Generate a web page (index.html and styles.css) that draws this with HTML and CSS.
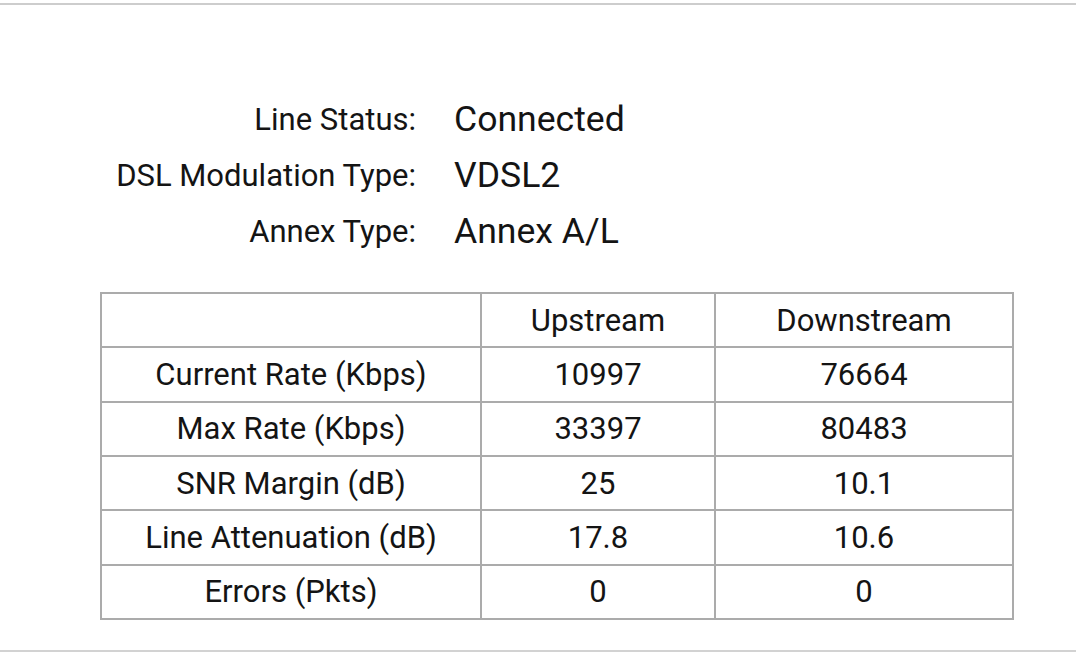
FILE: index.html
```html
<!DOCTYPE html>
<html lang="en">
<head>
<meta charset="utf-8">
<title>DSL Status</title>
<link rel="stylesheet" href="styles.css">
</head>
<body>
<div class="panel">
  <div class="info">
    <div class="label">Line Status:</div>
    <div class="value">Connected</div>
    <div class="label">DSL Modulation Type:</div>
    <div class="value">VDSL2</div>
    <div class="label">Annex Type:</div>
    <div class="value">Annex A/L</div>
  </div>
  <table class="stats">
    <colgroup>
      <col class="c1"><col class="c2"><col class="c3">
    </colgroup>
    <tr><td></td><td>Upstream</td><td>Downstream</td></tr>
    <tr><td>Current Rate (Kbps)</td><td>10997</td><td>76664</td></tr>
    <tr><td>Max Rate (Kbps)</td><td>33397</td><td>80483</td></tr>
    <tr><td>SNR Margin (dB)</td><td>25</td><td>10.1</td></tr>
    <tr><td>Line Attenuation (dB)</td><td>17.8</td><td>10.6</td></tr>
    <tr><td>Errors (Pkts)</td><td>0</td><td>0</td></tr>
  </table>
</div>
</body>
</html>
```
FILE: styles.css
```css
html, body {
  margin: 0;
  padding: 0;
  background: #ffffff;
}
body {
  font-family: Roboto, "Liberation Sans", sans-serif;
  color: #141414;
}
.panel {
  margin-top: 3px;
  height: 649px;
  box-sizing: border-box;
  border-top: 2px solid #cdcdcd;
  border-bottom: 2px solid #d2d2d2;
  padding-top: 93px;
}
.info {
  display: grid;
  grid-template-columns: 416px auto;
  column-gap: 38px;
  row-gap: 14px;
  align-items: center;
}
.label {
  font-size: 31px;
  text-align: right;
}
.value {
  font-size: 35.6px;
}
.stats {
  margin-top: 40px;
  margin-left: 100px;
  border-spacing: 0;
  border-top: 2px solid #ababab;
  border-left: 2px solid #ababab;
  table-layout: fixed;
  width: 914px;
  font-size: 31px;
}
.c1 { width: 380px; }
.c2 { width: 234px; }
.c3 { width: 298px; }
.stats td {
  box-sizing: border-box;
  height: 54.33px;
  padding: 0;
  text-align: center;
  vertical-align: middle;
  border-right: 2px solid #ababab;
  border-bottom: 2px solid #ababab;
}
```
